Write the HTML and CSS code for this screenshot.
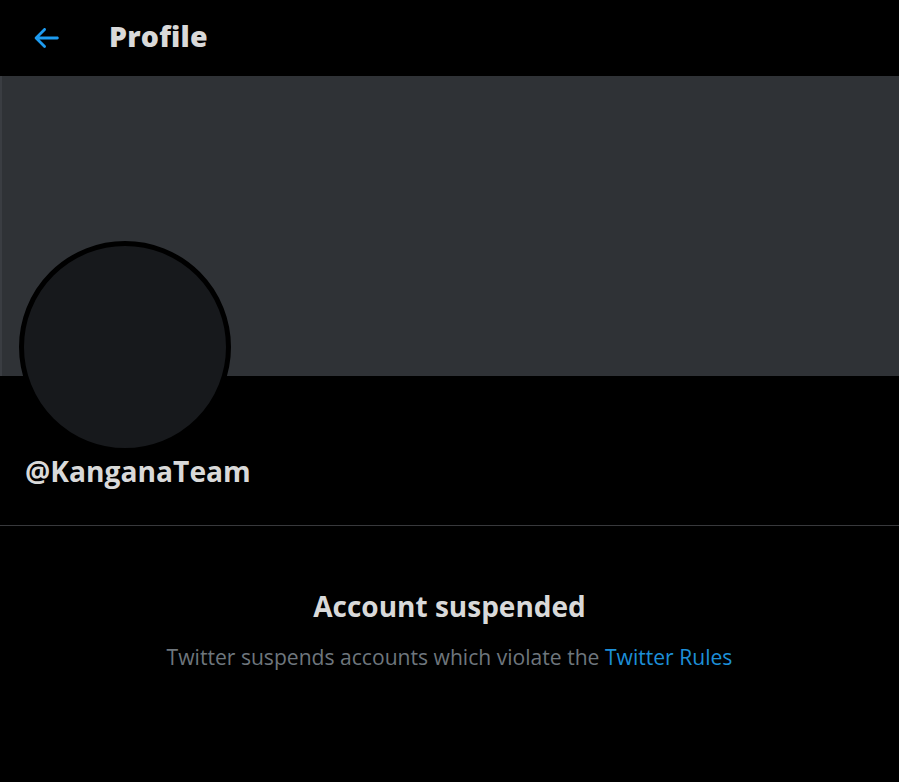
FILE: index.html
```html
<!DOCTYPE html>
<html>
<head>
<meta charset="utf-8">
<link rel="stylesheet" href="styles.css">
</head>
<body>
<div class="page">
  <header class="topbar">
    <div class="back">
      <svg viewBox="0 0 24 24" width="34" height="34"><path fill="#1d9bf0" d="M20 11H7.414l4.293-4.293c.39-.39.39-1.023 0-1.414s-1.023-.39-1.414 0l-6 6c-.39.39-.39 1.023 0 1.414l6 6c.195.195.45.293.707.293s.512-.098.707-.293c.39-.39.39-1.023 0-1.414L7.414 13H20c.553 0 1-.447 1-1s-.447-1-1-1z"/></svg>
    </div>
    <h1 class="title">Profile</h1>
  </header>
  <div class="banner"></div>
  <div class="info">
    <div class="avatar"></div>
    <div class="handle">@KanganaTeam</div>
  </div>
  <div class="suspended">
    <h2 class="s-title">Account suspended</h2>
    <p class="s-text">Twitter suspends accounts which violate the <a class="link">Twitter Rules</a></p>
  </div>
</div>
</body>
</html>
```

FILE: styles.css
```css
html, body {
  margin: 0;
  padding: 0;
  background: #000;
}
body {
  font-family: "Open Sans", "Noto Sans", sans-serif;
  color: #d9d9d9;
}
.page {
  width: 899px;
  height: 782px;
  overflow: hidden;
}
.topbar {
  height: 76px;
  display: flex;
  align-items: center;
}
.back {
  width: 34px;
  height: 34px;
  margin-left: 29px;
  margin-top: -1px;
}
.back svg { display: block; }
.title {
  margin: -4px 0 0 46px;
  font-size: 28.5px;
  font-weight: 800;
  color: #d9d9d9;
  letter-spacing: 0.2px;
}
.banner {
  height: 300px;
  background: #2f3236;
  border-left: 2px solid #3a3d42;
}
.info {
  position: relative;
  height: 149px;
  border-bottom: 1px solid #38393c;
}
.avatar {
  position: absolute;
  left: 19px;
  top: -135px;
  width: 202px;
  height: 202px;
  border-radius: 50%;
  background: #17191c;
  border: 5px solid #000;
}
.handle {
  position: absolute;
  left: 25px;
  top: 76px;
  font-size: 28.2px;
  font-weight: 700;
  color: #d9d9d9;
}
.suspended {
  text-align: center;
  padding-top: 61px;
}
.s-title {
  margin: 0;
  font-size: 28px;
  font-weight: 700;
  color: #d9d9d9;
  line-height: 38px;
}
.s-text {
  margin: 18px 0 0;
  font-size: 21.1px;
  color: #6e767d;
  line-height: 28px;
}
.link {
  color: #1d8fd8;
}
```
